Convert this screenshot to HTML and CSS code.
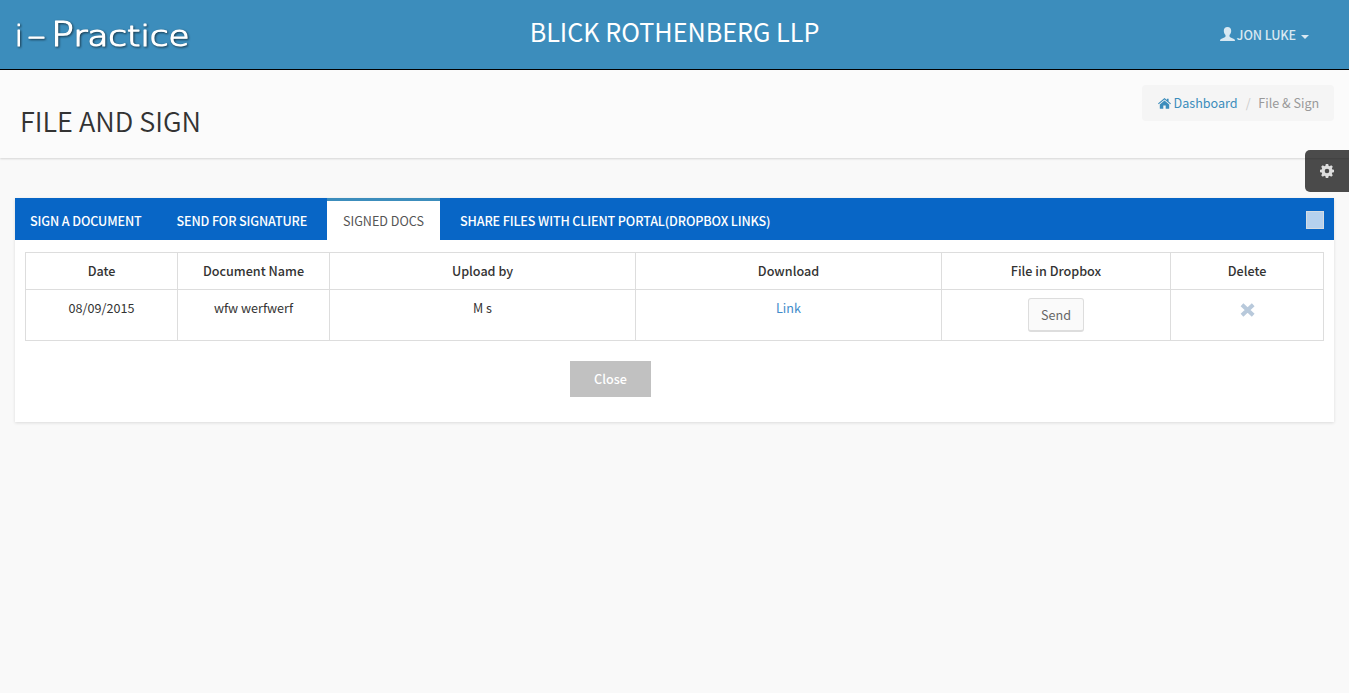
FILE: index.html
```html
<!DOCTYPE html>
<html lang="en">
<head>
<meta charset="utf-8">
<title>File and Sign</title>
<link rel="stylesheet" href="styles.css">
</head>
<body>
<header class="topbar">
  <a class="logo"><svg width="190" height="40" viewBox="0 0 190 40"><g class="logo-text"><text x="0" y="33">i</text><text x="12" y="32" textLength="19" lengthAdjust="spacingAndGlyphs">-</text><text y="33"><tspan class="logo-cap" x="36" textLength="23" lengthAdjust="spacingAndGlyphs">P</tspan><tspan x="58.500" textLength="116" lengthAdjust="spacingAndGlyphs">ractice</tspan></text></g></svg></a>
  <div class="company"><span class="t">BLICK ROTHENBERG LLP</span></div>
  <div class="user">
    <svg width="15" height="15" viewBox="0 0 15 15"><path fill="currentColor" d="M7.500 0C9.900 0 11.200 1.400 11.200 3.700 11.200 5.600 10.400 7.100 9.500 8v1.300c0 .6.500 1 1.200 1.300l2.700 1.100c1 .4 1.600 1 1.600 2.300H0c0-1.300.6-1.900 1.600-2.300l2.700-1.100c.7-.3 1.200-.7 1.200-1.300V8C4.600 7.100 3.800 5.600 3.800 3.700 3.800 1.400 5.100 0 7.500 0z"/></svg>
    <span class="user-name">JON LUKE</span><i class="caret"></i>
  </div>
</header>
<section class="page-head">
  <h1><span>FILE AND SIGN</span></h1>
  <nav class="crumbs">
    <svg width="13" height="11" viewBox="0 0 13 11"><path fill="currentColor" d="M6.500 2.600 11.200 6.500V10.200q0 .5-.5.500H7.700V7.500H5.300v3.200H2.300q-.5 0-.5-.5V6.500zM6.500 0 8.900 2V.7h1.700v2.700L13 5.400l-.7.900L6.500 1.500.7 6.300 0 5.400z"/></svg>
    <a class="crumb-home">Dashboard</a><span class="slash">/</span><span class="crumb-now">File &amp; Sign</span>
  </nav>
</section>
<div class="settings"><svg width="14" height="14" viewBox="0 0 14 14"><path fill="currentColor" fill-rule="evenodd" d="M5.800 0h2.400l.35 1.700 1.100.45L11.200 1.150l1.650 1.650-1 1.550.45 1.100 1.700.35v2.400l-1.700.35-.45 1.100 1 1.550-1.650 1.650-1.550-1-1.100.45L8.200 14H5.800l-.35-1.700-1.100-.45-1.550 1L1.150 11.200l1-1.550-.45-1.100L0 8.200V5.800l1.700-.35.45-1.100-1-1.550L2.800 1.150l1.550 1 1.100-.45zM7 4.700a2.300 2.300 0 1 0 0 4.600 2.300 2.300 0 0 0 0-4.600z"/></svg></div>
<main class="card">
  <div class="tabs">
    <a class="tab tab-sign">SIGN A DOCUMENT</a>
    <a class="tab tab-send">SEND FOR SIGNATURE</a>
    <a class="tab active">SIGNED DOCS</a>
    <a class="tab tab-share">SHARE FILES WITH CLIENT PORTAL(DROPBOX LINKS)</a>
    <i class="box"></i>
  </div>
  <div class="panel">
    <table class="docs">
      <colgroup><col class="c-s"><col class="c-s"><col class="c-l"><col class="c-l"><col class="c-m"><col class="c-d"></colgroup>
      <thead><tr><th>Date</th><th>Document Name</th><th>Upload by</th><th>Download</th><th>File in Dropbox</th><th>Delete</th></tr></thead>
      <tbody><tr><td>08/09/2015</td><td>wfw werfwerf</td><td>M s</td><td><a class="link">Link</a></td><td><button class="send">Send</button></td><td><svg class="x" width="15" height="14" viewBox="0 0 15 14"><path stroke="currentColor" stroke-width="4" d="M2 1.700 13.200 12.300M13.200 1.700 2 12.300"/></svg></td></tr></tbody>
    </table>
    <button class="close">Close</button>
  </div>
</main>
</body>
</html>
```

FILE: styles.css
```css
* { box-sizing: border-box; }
body {
  margin: 0;
  height: 693px;
  overflow: hidden;
  background: #f9f9f9;
  color: #333;
  font: 12.600px/20px "Noto Sans CJK SC", "Open Sans", sans-serif;
}
svg { display: block; flex: none; }
.topbar {
  height: 70px;
  display: grid;
  grid-template-columns: 400px 549px 400px;
  background: #3c8dbc;
  border-bottom: 1px solid #000;
  color: #fff;
}
.logo { padding: 13px 0 0 15px; }
.logo svg { overflow: visible; }
.logo-text {
  font-family: "DejaVu Sans", sans-serif;
  font-weight: 200;
  font-size: 28px;
  fill: #fff;
  stroke: #fff;
  stroke-width: 1.200px;
  stroke-linejoin: round;
  filter: drop-shadow(1px 1px 1px rgba(0, 0, 0, .6));
}
.logo-cap { font-size: 34px; }
.company { text-align: center; font-size: 25.200px; line-height: 63px; white-space: nowrap; }
.user {
  display: flex;
  justify-content: flex-end;
  align-items: center;
  height: 70px;
  padding-right: 40px;
  color: #d8e8f2;
  font-weight: 500;
  letter-spacing: -.1px;
}
.user svg { margin: -2px 2px 0 0; }
.caret {
  margin: 4px 0 0 5px;
  border: 4px solid transparent;
  border-top-color: currentColor;
  border-bottom: 0;
}
.page-head {
  height: 88px;
  display: flex;
  justify-content: space-between;
  align-items: flex-start;
  padding: 15px 15px 0 20px;
  background: #fbfbfb;
  box-shadow: 0 1px 2px rgba(0, 0, 0, .15);
}
h1 { margin: 19px 0 0; font-size: 27.100px; line-height: 34px; font-weight: 350; }
.crumbs {
  display: flex;
  align-items: center;
  height: 36px;
  width: 192px;
  padding-left: 15.500px;
  background: #f5f5f5;
  border-radius: 4px;
  color: #3c8dbc;
  white-space: nowrap;
}
.crumb-home { margin-left: 3px; }
.slash { margin: 0 7.700px 0 8px; color: #ccc; }
.crumb-now { color: #999; }
.settings {
  position: absolute;
  right: 0;
  top: 150px;
  width: 44px;
  height: 42px;
  padding: 14px 15px;
  background: rgba(0, 0, 0, .7);
  border-radius: 5px 0 0 5px;
  color: #ddd;
}
.card {
  margin: 40px 15px 0;
  height: 224px;
  background: #fff;
  box-shadow: 0 1px 3px rgba(0, 0, 0, .12);
}
.tabs {
  display: flex;
  height: 42px;
  background: #0866c6;
  color: #fff;
  font-weight: 500;
  line-height: 46px;
  letter-spacing: -.13px;
  white-space: nowrap;
}
.tab-sign { width: 146px; padding-left: 15px; }
.tab-send { width: 166px; padding-left: 15.500px; }
.active {
  width: 113px;
  height: 43px;
  border-top: 3px solid #3c8dbc;
  background: #fff;
  color: #555;
  font-weight: 400;
  letter-spacing: 0;
  line-height: 40px;
  text-align: center;
}
.tab-share { padding-left: 20px; }
.box { margin: 13px 10px 0 auto; width: 18px; height: 18px; background: #b5d1ee; border: 1px solid #d5dce2; }
.panel { padding: 12px 10px 0; }
.docs { width: 1299px; border-collapse: collapse; table-layout: fixed; text-align: center; }
.c-s { width: 152px; }
.c-l { width: 306px; }
.c-m { width: 229px; }
.c-d { width: 153px; }
th, td { border: 1px solid #ddd; padding: 8px 0; vertical-align: top; }
th { height: 37px; font-weight: 500; }
td { height: 51px; }
.link { color: #428bca; }
.send {
  display: block;
  margin: 0 auto;
  width: 56px;
  height: 34px;
  padding: 0;
  border: 1px solid #ddd;
  border-bottom-width: 2px;
  border-radius: 3px;
  background: #fafafa;
  color: #666;
  font: inherit;
}
.x { margin: 5px auto 0; color: #b8c9db; }
.close {
  display: block;
  width: 81px;
  height: 36px;
  margin: 20px 0 0 545px;
  padding: 0;
  border: 0;
  background: #c1c1c1;
  color: #fff;
  font: inherit;
  font-weight: 500;
}
```
